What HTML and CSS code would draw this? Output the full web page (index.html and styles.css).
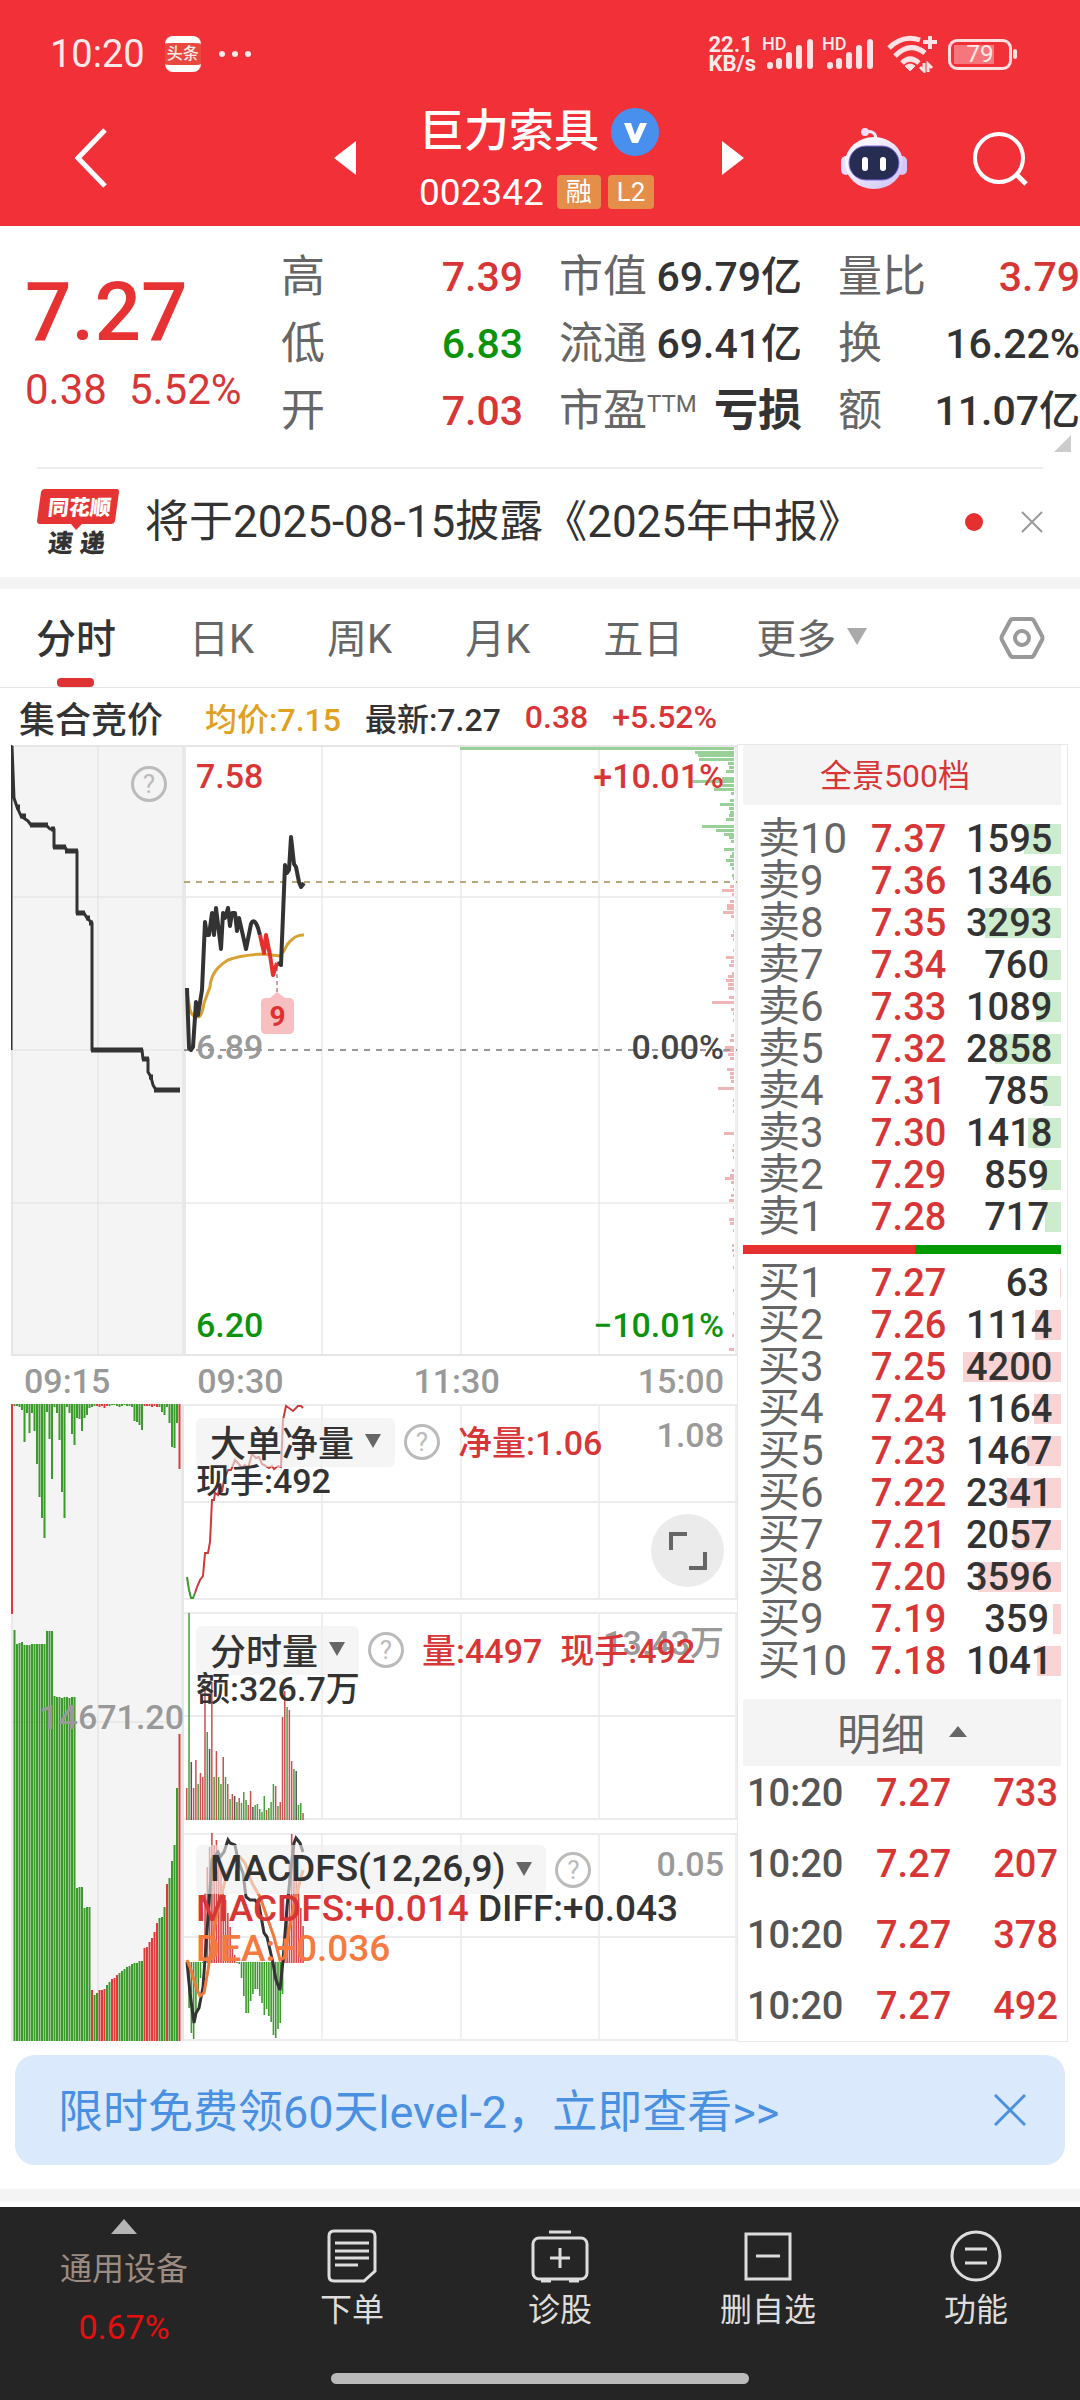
FILE: index.html
```html
<!DOCTYPE html>
<html lang="zh-CN">
<head>
<meta charset="utf-8">
<meta name="viewport" content="width=device-width">
<title>巨力索具 002342</title>
<link rel="stylesheet" href="styles.css">
</head>
<body>
<header class="top">
  <div class="status">
    <span class="clock">10:20</span>
    <span class="app-chip">头条</span>
    <span class="dots"><i></i><i></i><i></i></span>
    <span class="speed">22.1<br>KB/s</span>
    <span class="signal"><b>HD</b>
      <svg width="50" height="32" viewBox="0 0 50 32" fill="none" stroke="#ffe3e4" stroke-width="6" stroke-linecap="round"><path d="M5 28v-1M14 28v-5M24 28V17M34 28V10M45 28V4"/></svg></span>
    <span class="signal"><b>HD</b>
      <svg width="50" height="32" viewBox="0 0 50 32" fill="none" stroke="#ffe3e4" stroke-width="6" stroke-linecap="round"><path d="M5 28v-1M14 28v-5M24 28V17M34 28V10M45 28V4"/></svg></span>
    <svg class="wifi" width="51" height="38" viewBox="0 0 51 38" fill="none" stroke="#ffe3e4" stroke-width="5"><path d="M2 13Q16-1 33 5M8 21Q23 6 38 18M15 28Q23 20 32 28"/><path d="M18 31q5-4 10 0l-5 5z" fill="#ffe3e4" stroke-width="1"/><path d="M43 1v13M36 7h14" stroke-width="4"/><path d="M37 28v8l-4-4M41 37v-8l4 4" stroke-width="3"/></svg>
    <span class="battery"><span>79</span></span>
  </div>
  <div class="titlebar">
    <button class="ic back" aria-label="返回"><svg width="34" height="62" viewBox="0 0 34 62" fill="none" stroke="#fff" stroke-width="5"><path d="M31 3L4 31l27 28"/></svg></button>
    <button class="ic prev" aria-label="上一只"><svg width="24" height="36" viewBox="0 0 24 36" fill="#fff"><path d="M23 1v34L1 18z"/></svg></button>
    <div class="stock">
      <h1>巨力索具<svg width="48" height="48" viewBox="0 0 48 48"><circle cx="24" cy="24" r="24" fill="#4990ee"/><path d="M13 15h7l4 12 5-12h7l-9 20h-6z" fill="#fff"/></svg></h1>
      <div class="code">002342<span class="tag">融</span><span class="tag">L2</span></div>
    </div>
    <button class="ic next" aria-label="下一只"><svg width="24" height="36" viewBox="0 0 24 36" fill="#fff"><path d="M1 1v34l22-17z"/></svg></button>
    <button class="ic robot" aria-label="智能助手"><svg width="66" height="64" viewBox="0 0 66 64"><defs><linearGradient id="rb" x1="0" y1="0" x2="1" y2="1"><stop offset=".3" stop-color="#fbf3ff"/><stop offset="1" stop-color="#c9bff5"/></linearGradient></defs><path d="M24 6q10-2 11 6" fill="none" stroke="#f3e9ff" stroke-width="3"/><circle cx="24" cy="6" r="4" fill="#f3dcf4"/><rect x="0" y="30" width="10" height="19" rx="5" fill="#e9dcff"/><rect x="56" y="30" width="10" height="19" rx="5" fill="#d4c6fa"/><ellipse cx="33" cy="37" rx="29" ry="26" fill="url(#rb)"/><rect x="8" y="20" width="50" height="34" rx="17" fill="#272c52" stroke="#7d6fe0" stroke-width="1"/><rect x="21" y="31" width="6" height="14" rx="3" fill="#fff"/><rect x="39" y="31" width="6" height="14" rx="3" fill="#fff"/></svg></button>
    <button class="ic search" aria-label="搜索"><svg width="56" height="56" viewBox="0 0 56 56" fill="none" stroke="#fff" stroke-width="4"><circle cx="27" cy="28" r="24"/><path d="M44 44l10 10" stroke-width="5"/></svg></button>
  </div>
</header>

<main>
<section class="quote">
  <div class="last"><strong>7.27</strong><span>0.38</span><span>5.52%</span></div>
  <dl class="facts f1"><dt>高</dt><dd class="up">7.39</dd><dt>低</dt><dd class="down">6.83</dd><dt>开</dt><dd class="up">7.03</dd></dl>
  <dl class="facts f2"><dt>市值</dt><dd>69.79亿</dd><dt>流通</dt><dd>69.41亿</dd><dt>市盈<sup>TTM</sup></dt><dd class="heavy">亏损</dd></dl>
  <dl class="facts f3"><dt>量比</dt><dd class="up">3.79</dd><dt>换</dt><dd>16.22%</dd><dt>额</dt><dd>11.07亿</dd></dl>
  <i class="corner"></i>
</section>
<section class="news">
  <svg width="82" height="68" viewBox="0 0 82 68"><path d="M8 1h72q2 0 2 3l-4 29q-1 3-4 3H45l-6 6-5-6H3q-3 0-3-3L4 4q1-3 4-3z" fill="#e63434"/><g transform="skewX(-6)" font-family="Noto Sans CJK SC" font-weight="900"><text x="13" y="27" font-size="21" fill="#fff">同花顺</text><text x="17" y="64" font-size="25" fill="#333">速</text><text x="49" y="64" font-size="25" fill="#333">递</text></g></svg>
  <a href="#news">将于2025-08-15披露《2025年中报》</a>
  <i class="red-dot"></i>
  <button class="ic" aria-label="关闭"><svg width="22" height="22" viewBox="0 0 22 22" stroke="#999" stroke-width="2"><path d="M1 1l20 20M21 1L1 21"/></svg></button>
</section>
<nav class="tabs">
  <button class="active">分时</button><button>日K</button><button>周K</button><button>月K</button><button>五日</button><button>更多<i class="caret light"></i></button>
  <button class="gear" aria-label="设置"><svg width="46" height="44" viewBox="0 0 46 44" fill="none" stroke="#999" stroke-width="4"><path d="M14 3h18q2 0 3 2l8 15q1 2 0 4l-8 15q-1 2-3 2H14q-2 0-3-2L3 24q-1-2 0-4l8-15q1-2 3-2z"/><circle cx="23" cy="22" r="7"/></svg></button>
</nav>

<div class="board">
  <div class="charts">
    <div class="legend"><b>集合竞价</b><span class="avg">均价:7.15</span><span>最新:7.27</span><span class="up">0.38</span><span class="up">+5.52%</span></div>
    <div class="price">
      <svg viewBox="0 0 726 611" preserveAspectRatio="none">
        <path d="M0 0h172v610H0z" fill="#f4f4f4"/>
        <path d="M0 1h726M0 610h726M1 0v610" stroke="#e6e6e6" stroke-width="2"/>
        <path d="M0 152h726M0 305h173M0 458h726M87 0v610M311 0v610M450 0v610M588 0v610M725 0v610" stroke="#e0e0e0"/>
        <path d="M173 0v611" stroke="#e8e8e8" stroke-width="4"/>
        <g id="profile"></g>
        <path d="M173 137h553" stroke="#b8a878" stroke-width="2" stroke-dasharray="6 6"/>
        <path d="M173 305h553" stroke="#999" stroke-width="2" stroke-dasharray="6 6"/>
        <g fill="none" stroke="#333" stroke-linejoin="round">
          <path stroke-width="3" d="M0 0V305M1 1L3 53L6 62L10 71L17 76L20 80H35L39 84H43V102H54L56 106H66V168H73L76 173L81 178V305H131L132 314H137V327L140 332L142 340L145 345H168"/>
          <path stroke-width="5" d="M5 62h4M9 71h6M19 80h18M40 84h4M42 102h13M54 106h13M65 168h9M75 173h4M78 178h4M80 305h52M131 314h7M138 332h4M143 345h26"/>
          <path stroke="#d9a032" stroke-width="3" d="M176 248L179 265Q181 272 187 272Q191 272 193 258L199 242Q200 225 217 215Q230 210 252 209L269 211Q273 207 276 200Q284 189 293 190"/>
          <path stroke-width="4" d="M176 243L178 303L180 305L182 302L185 257L187 270L191 245L194 177L196 190H198L201 168L203 190L205 163L210 204L212 168L214 173L217 163L219 181L221 168H224L226 186L228 173L235 204L240 179Q243 172 247 183L249 190M266 218L270 220L274 120L276 128L278 125L280 92L283 119L285 122L288 137L290 142L293 138"/>
          <path stroke="#e63030" stroke-width="4" d="M249 190L253 208L255 190L259 210L262 230L266 218"/>
        </g>
        <path d="M266 222v26" stroke="#a04040" stroke-dasharray="4 3"/>
        <path d="M266 247l8 6h4q5 0 5 5v26q0 5-5 5h-23q-5 0-5-5v-26q0-5 5-5h4z" fill="#f7bfc0"/>
      </svg>
      <span class="signal-nine">9</span>
      <button class="help auction-help" aria-label="说明">?</button>
      <div class="scale"><p class="up"><span>7.58</span><span>+10.01%</span></p><p class="mid"><span>6.89</span><span>0.00%</span></p><p class="down"><span>6.20</span><span>−10.01%</span></p></div>
    </div>
    <div class="axis"><span>09:15</span><span>09:30</span><span>11:30</span><span>15:00</span></div>
    <div class="lower">
      <div class="auction">
        <svg viewBox="0 0 173 637" preserveAspectRatio="none">
          <path d="M0 0h172v637H0z" fill="#f4f4f4"/>
          <path d="M87 0v637M0 318h173M1 0v637" stroke="#dedede"/>
          <path d="M172 0v637" stroke="#e6e6e6" stroke-width="3"/>
          <g id="auctionNet"></g><g id="auctionVol"></g>
        </svg>
        <span class="auction-max">14671.20</span>
      </div>
      <div class="panels">
        <div class="panel p1">
          <svg viewBox="0 0 553 196" preserveAspectRatio="none">
            <path class="grid" d="M138 0v196M277 0v196M415 0v196M552 0v196"/><path class="rule" d="M0 1h553M0 98h553M0 195h553"/>
            <g fill="none" stroke-width="2"><path stroke="#3a9a2a" d="M3 173L5 186L7 194H9L11 189"/><path stroke="#cc3a3a" d="M11 189L13 183L16 176L19 172L21 149H24L26 138L28 96H30L31 89L34 91L36 80L38 88L40 76L44 66H47L51 56L54 59L58 64L61 61L64 64L68 50L72 54L75 53L78 60L80 61L85 64L88 62L90 65L94 62L97 63L99 16L102 2L105 4L109 7L114 2L117 2L119 4"/></g>
          </svg>
          <div class="info"><button class="pick">大单净量<i class="caret"></i></button><button class="help" aria-label="说明">?</button><span class="up">净量:1.06</span></div>
          <div class="info2">现手:492</div><span class="max">1.08</span>
          <button class="expand" aria-label="全屏"><svg width="40" height="40" viewBox="0 0 40 40" fill="none" stroke="#666" stroke-width="4"><path d="M3 19V3h16M37 21v16H21"/></svg></button>
        </div>
        <div class="panel p2">
          <svg viewBox="0 0 553 208" preserveAspectRatio="none">
            <path class="grid" d="M138 0v208M277 0v208M415 0v208M552 0v208"/><path class="rule" d="M0 1h553M0 104h553M0 207h553"/><g id="vol"></g>
          </svg>
          <span class="max">13.43万</span>
          <div class="info"><button class="pick">分时量<i class="caret"></i></button><button class="help" aria-label="说明">?</button><span class="up">量:4497</span><span class="up">现手:492</span></div>
          <div class="info2">额:326.7万</div>
        </div>
        <div class="panel p3">
          <svg viewBox="0 0 553 208" preserveAspectRatio="none">
            <path class="grid" d="M138 0v208M277 0v208M415 0v208M552 0v208"/><path class="rule" d="M0 1h553M0 104h553M0 207h553"/><g id="macd"></g>
            <g fill="none" stroke-width="3"><path stroke="#333" d="M3 129L6 160L10 190L12 180L15 175L19 154L24 84L28 27L34 19L36 24L40 19L44 7L46 10L51 12L54 27L59 40L62 64L66 67H71L75 72L80 100L83 104L89 130L92 147L96 157L99 127L103 74L108 27L110 10L112 5L116 10L119 19"/><path stroke="#f07a3c" d="M3 127L7 137L12 154L16 163L20 160L24 137L27 117L33 80L43 40L50 27L56 24L61 30L68 50L76 64L83 84L90 104L96 127L101 124L105 97L111 67L119 37"/></g>
          </svg>
          <div class="info"><button class="pick">MACDFS(12,26,9)<i class="caret"></i></button><button class="help" aria-label="说明">?</button></div>
          <div class="info2"><span class="up">MACDFS:+0.014</span> DIFF:+0.043<br><span class="dea">DEA:+0.036</span></div><span class="max">0.05</span>
        </div>
      </div>
    </div>
  </div>

  <aside class="book">
    <button class="book-head">全景500档</button>
    <table class="depth sell"><tbody>
      <tr><th>卖10</th><td>7.37</td><td><i style="width:37px"></i><span>1595</span></td></tr>
      <tr><th>卖9</th><td>7.36</td><td><i style="width:31px"></i><span>1346</span></td></tr>
      <tr><th>卖8</th><td>7.35</td><td><i style="width:76px"></i><span>3293</span></td></tr>
      <tr><th>卖7</th><td>7.34</td><td><i style="width:18px"></i><span>760</span></td></tr>
      <tr><th>卖6</th><td>7.33</td><td><i style="width:25px"></i><span>1089</span></td></tr>
      <tr><th>卖5</th><td>7.32</td><td><i style="width:66px"></i><span>2858</span></td></tr>
      <tr><th>卖4</th><td>7.31</td><td><i style="width:18px"></i><span>785</span></td></tr>
      <tr><th>卖3</th><td>7.30</td><td><i style="width:33px"></i><span>1418</span></td></tr>
      <tr><th>卖2</th><td>7.29</td><td><i style="width:20px"></i><span>859</span></td></tr>
      <tr><th>卖1</th><td>7.28</td><td><i style="width:16px"></i><span>717</span></td></tr>
    </tbody></table>
    <div class="ratio"><i style="width:54%"></i></div>
    <table class="depth buy"><tbody>
      <tr><th>买1</th><td>7.27</td><td><i style="width:1px"></i><span>63</span></td></tr>
      <tr><th>买2</th><td>7.26</td><td><i style="width:26px"></i><span>1114</span></td></tr>
      <tr><th>买3</th><td>7.25</td><td><i style="width:98px"></i><span>4200</span></td></tr>
      <tr><th>买4</th><td>7.24</td><td><i style="width:27px"></i><span>1164</span></td></tr>
      <tr><th>买5</th><td>7.23</td><td><i style="width:34px"></i><span>1467</span></td></tr>
      <tr><th>买6</th><td>7.22</td><td><i style="width:54px"></i><span>2341</span></td></tr>
      <tr><th>买7</th><td>7.21</td><td><i style="width:48px"></i><span>2057</span></td></tr>
      <tr><th>买8</th><td>7.20</td><td><i style="width:83px"></i><span>3596</span></td></tr>
      <tr><th>买9</th><td>7.19</td><td><i style="width:8px"></i><span>359</span></td></tr>
      <tr><th>买10</th><td>7.18</td><td><i style="width:24px"></i><span>1041</span></td></tr>
    </tbody></table>
    <button class="detail-head">明细<i class="caret upward"></i></button>
    <table class="ticks"><tbody>
      <tr><td>10:20</td><td>7.27</td><td>733</td></tr>
      <tr><td>10:20</td><td>7.27</td><td>207</td></tr>
      <tr><td>10:20</td><td>7.27</td><td>378</td></tr>
      <tr><td>10:20</td><td>7.27</td><td>492</td></tr>
    </tbody></table>
  </aside>
</div>

<div class="banner"><a href="#level2">限时免费领60天level-2，立即查看&gt;&gt;</a><button class="ic" aria-label="关闭"><svg width="32" height="32" viewBox="0 0 32 32" stroke="#4a90e2" stroke-width="3"><path d="M1 1l30 30M31 1L1 31"/></svg></button></div>
<div class="strip"></div>
</main>

<footer class="dock">
  <div class="dock-row">
    <button class="sector"><i class="caret upward"></i><span>通用设备</span><em>0.67%</em></button>
    <button><svg width="50" height="54" viewBox="0 0 50 54" fill="none" stroke="#ddd" stroke-width="3"><path d="M7 2h36q5 0 5 5v35l-11 10H7q-5 0-5-5V7q0-5 5-5zM8 14h34M8 22h34M8 29h34M8 36h23"/></svg>下单</button>
    <button><svg width="58" height="54" viewBox="0 0 58 54" fill="none" stroke="#ddd" stroke-width="3"><rect x="2" y="9" width="54" height="41" rx="6"/><path d="M18 3h22M29 19v20M19 29h20M10 52h10M38 52h10"/></svg>诊股</button>
    <button><svg width="50" height="54" viewBox="0 0 50 54" fill="none" stroke="#ddd" stroke-width="3"><path d="M3 5h44v45H3zM13 27h24"/></svg>删自选</button>
    <button><svg width="54" height="54" viewBox="0 0 54 54" fill="none" stroke="#ddd" stroke-width="3"><circle cx="27" cy="27" r="24"/><path d="M16 20h22M16 34h22"/></svg>功能</button>
  </div>
  <i class="home"></i>
</footer>
<script src="charts.js"></script>
</body>
</html>
```
FILE: styles.css
```css
* { box-sizing: border-box; }
body { margin: 0; background: #fff; color: #333; font-family: Roboto, "Noto Sans CJK SC", sans-serif; }
button { margin: 0; padding: 0; border: 0; background: none; color: inherit; font: inherit; }
a { color: inherit; text-decoration: none; }
svg { display: block; flex: none; }
h1, p, dl, dd { margin: 0; }
table { border-collapse: collapse; }
.up { color: #d83636; }
.down { color: #0b930b; }
.ic { display: flex; }

/* header */
.top { background: #f13037; color: #fff; padding-bottom: 14px; }
.status { display: flex; align-items: center; height: 104px; padding: 4px 68px 0 50px; color: #ffe9ea; }
.clock { font-size: 38px; }
.app-chip { width: 36px; height: 36px; margin-left: 20px; border: solid #fff; border-width: 7px 0; border-radius: 8px; background: #e8483e; font-size: 16px; line-height: 22px; text-align: center; font-weight: 500; }
.dots { display: flex; gap: 7px; margin-left: 18px; }
.dots i { width: 6px; height: 6px; border-radius: 50%; background: #ffe9ea; }
.speed { margin-left: auto; font-size: 22px; line-height: 19px; font-weight: 700; }
.signal { position: relative; margin-left: 9px; }
.signal b { position: absolute; left: -3px; top: -2px; font-size: 18px; line-height: 16px; font-weight: 500; }
.signal + .signal { margin-left: 10px; }
.wifi { margin-left: 12px; }
.battery { position: relative; width: 64px; height: 31px; margin-left: 10px; padding: 3px; border: 3px solid #ffdfe0; border-radius: 9px; font-size: 24px; line-height: 19px; text-align: center; }
.battery span { display: block; background: linear-gradient(90deg, #f5777b 40px, transparent 40px); }
.battery::after { content: ""; position: absolute; right: -8px; top: 7px; width: 4px; height: 10px; border-radius: 2px; background: #ffdfe0; }
.titlebar { display: flex; align-items: center; height: 108px; padding: 0 52px 0 74px; }
.prev { margin-left: auto; }
.stock { margin: 0 62px; }
.stock h1 { display: flex; align-items: center; gap: 12px; height: 60px; padding-top: 6px; font-size: 45px; line-height: 48px; font-weight: 500; }
.code { display: flex; align-items: center; gap: 7px; height: 58px; padding-top: 8px; font-size: 37px; }
.tag { height: 34px; padding: 0 9px; border-radius: 4px; background: #e58e49; font-size: 26px; line-height: 34px; }
.code .tag:first-child { margin-left: 6px; }
.robot { margin-left: 96px; }
.search { margin-left: 65px; }

/* quote */
.quote { position: relative; display: flex; height: 241px; padding: 18px 0 0 25px; }
.last { width: 256px; padding-top: 20px; color: #d83636; font-size: 42px; line-height: 60px; white-space: nowrap; }
.last strong { display: block; font-size: 82px; line-height: 96px; font-weight: 500; color: #e63232; }
.last span { margin-right: 22px; }
.last span + span { margin-right: 0; }
.facts { display: grid; grid-template-columns: auto auto; justify-content: space-between; grid-auto-rows: 67px; line-height: 67px; font-size: 41px; white-space: nowrap; }
.facts dt { color: #666; font-size: 44px; }
.facts dd { text-align: right; font-weight: 500; }
.facts sup { position: absolute; font-size: 24px; line-height: 52px; }
.facts .heavy { font-size: 44px; font-weight: 700; }
.f1 { width: 242px; }
.f2 { width: 243px; margin-left: 36px; }
.f3 { flex: 1; margin-left: 36px; }
.corner { position: absolute; right: 9px; bottom: 15px; border: solid transparent; border-width: 0 0 17px 17px; border-bottom-color: #ccc; }

.news { display: flex; align-items: center; height: 110px; margin: 0 37px; padding-bottom: 2px; border-top: 2px solid #ececec; font-size: 44px; }
.news svg { overflow: visible; }
.news a { margin-left: 26px; line-height: 54px; white-space: nowrap; }
.red-dot { width: 18px; height: 18px; margin: 0 38px 0 auto; border-radius: 50%; background: #e63030; }

.tabs { display: flex; align-items: center; gap: 73px; height: 111px; padding: 0 35px 0 36px; border-top: 12px solid #f4f4f4; border-bottom: 1px solid #e4e4e4; color: #666; font-size: 40px; }
.tabs button { position: relative; display: flex; align-items: center; height: 98px; padding-bottom: 4px; white-space: nowrap; }
.tabs .active { color: #333; font-weight: 500; }
.tabs .active::after { content: ""; position: absolute; left: 21px; bottom: 0; width: 37px; height: 9px; border-radius: 4px; background: #e03232; }
.tabs .gear { margin-left: auto; padding-bottom: 0; }
.caret { display: inline-block; margin-left: 11px; border: solid transparent; border-width: 14px 8px 0; border-top-color: #666; }
.caret.light { border-width: 17px 10px 0; border-top-color: #aaa; }
.caret.upward { border-width: 0 9px 11px; border-bottom-color: #666; }

/* chart board */
.board { display: grid; grid-template-columns: minmax(0, 1fr) 331px; padding: 0 12px 0 11px; }
.legend { display: flex; align-items: center; gap: 24px; height: 57px; padding: 0 0 0 8px; font-size: 32px; white-space: nowrap; }
.legend b { margin-right: 18px; font-size: 36px; font-weight: 500; }
.legend span { font-weight: 500; }
.avg { color: #e0a020; }
.price { position: relative; height: 611px; }
.price > svg, .auction > svg, .panel > svg { width: 100%; height: 100%; }
.signal-nine { position: absolute; left: 250px; top: 254px; width: 33px; font-size: 28px; line-height: 36px; font-weight: 700; text-align: center; color: #e03030; }
.scale { position: absolute; inset: 9px 13px 9px 185px; display: flex; flex-direction: column; justify-content: space-between; font-size: 34px; line-height: 44px; font-weight: 500; }
.scale p { display: flex; justify-content: space-between; }
.mid { margin-bottom: 8px; color: #444; }
.mid span:first-child { color: #999; }
.help { width: 36px; height: 36px; border: 3px solid #bbb; border-radius: 50%; color: #bbb; font-size: 26px; line-height: 30px; text-align: center; }
.auction-help { position: absolute; left: 120px; top: 21px; }
.axis { display: flex; height: 48px; padding: 1px 13px 0; color: #999; font-size: 34px; line-height: 48px; font-weight: 500; }
.axis span:nth-child(2) { margin-left: 87px; }
.axis span:nth-child(3) { margin-left: auto; }
.axis span:nth-child(4) { margin-left: 138px; }
.lower { display: grid; grid-template-columns: 173px minmax(0, 1fr); height: 637px; }
.auction { position: relative; min-height: 0; }
.auction-max { position: absolute; right: 0; top: 291px; color: #999; font-size: 34px; line-height: 44px; font-weight: 500; }
.panels { display: flex; flex-direction: column; gap: 12px; }
.panel { position: relative; height: 208px; }
.panel.p1 { height: 196px; }
.panel.p2 { margin-bottom: 1px; }
.grid { stroke: #e0e0e0; }
.rule { stroke: #ececec; stroke-width: 2; }
.info { position: absolute; left: 12px; top: 12px; display: flex; align-items: center; font-size: 34px; font-weight: 500; white-space: nowrap; }
.pick { display: flex; align-items: center; height: 49px; padding: 0 14px 2px; border-radius: 6px; background: rgba(238, 238, 238, .6); font-size: 36px; font-weight: 500; }
.info .help { margin: 0 18px 0 9px; font-weight: 400; }
.info span { margin-bottom: 3px; }
.info span + span { margin-left: 18px; }
.info2 { position: absolute; left: 12px; top: 56px; font-size: 34px; line-height: 42px; font-weight: 500; white-space: nowrap; }
.p3 .pick { font-size: 37px; }
.p3 .info2 { font-size: 37px; line-height: 40px; }
.dea { color: #f47a40; }
.max { position: absolute; right: 13px; top: 9px; color: #999; font-size: 34px; line-height: 44px; font-weight: 500; }
.expand { position: absolute; right: 13px; top: 110px; display: flex; align-items: center; justify-content: center; width: 73px; height: 73px; border-radius: 50%; background: #ebebeb; }

/* order book */
.book { margin-top: 56px; padding: 0 6px 0 5px; border: 1px solid #e8e8e8; }
.book-head, .detail-head { display: block; width: 100%; background: #f4f4f4; }
.book-head { height: 60px; margin-bottom: 13px; padding: 0 14px 4px 0; color: #d83636; font-size: 32px; }
.depth { width: 100%; table-layout: fixed; }
.depth tr { height: 42px; }
.depth th, .depth td { padding: 0; line-height: 42px; }
.depth th { width: 128px; padding-left: 15px; color: #666; font-size: 42px; font-weight: 400; text-align: left; }
.depth td { color: #d83636; font-size: 38px; font-weight: 500; }
.depth td:last-child { position: relative; padding-right: 12px; color: #333; text-align: right; }
.depth i { position: absolute; right: 0; top: 6px; height: 30px; background: #cdebcd; }
.depth span { position: relative; }
.buy i { background: #f9d4d5; }
.ratio { display: flex; height: 9px; margin: 7px 0 8px; background: #009a00; }
.ratio i { background: #e63030; }
.detail-head { display: flex; align-items: center; justify-content: center; height: 67px; margin-top: 17px; padding-bottom: 2px; color: #666; font-size: 44px; }
.detail-head .caret { margin-left: 24px; }
.ticks { width: 100%; margin-top: -9px; table-layout: fixed; }
.ticks td { height: 71px; padding: 0; color: #d83636; font-size: 38px; font-weight: 500; }
.ticks td:first-child { width: 133px; padding-left: 4px; color: #555; }
.ticks td:last-child { padding-right: 3px; text-align: right; }

.banner { display: flex; align-items: center; justify-content: space-between; height: 110px; margin: 13px 15px 24px; padding: 0 39px 0 43px; border-radius: 20px; background: #dae9fb; color: #4a90e2; font-size: 45px; }
.banner a { margin-bottom: 4px; }
.strip { height: 12px; margin-bottom: 6px; background: #f4f4f4; }

/* bottom dock */
.dock { height: 193px; background: #252525; color: #ddd; font-size: 32px; }
.dock-row { display: grid; grid-template-columns: 248fr repeat(4, 208fr); height: 166px; }
.dock-row button { display: flex; flex-direction: column; align-items: center; padding-top: 22px; line-height: 54px; }
.dock-row .sector { padding-top: 12px; line-height: 58px; color: #9b8b80; }
.sector .caret { margin: 0 0 6px; border-width: 0 13px 15px; border-bottom-color: #b5b5b5; }
.sector em { color: #e60f0f; font-size: 34px; font-style: normal; }
.home { display: block; width: 418px; height: 11px; margin: 0 auto; border-radius: 6px; background: #bbb; }
```
FILE: charts.js
```js
var NS = 'http://www.w3.org/2000/svg';
var GREEN = '#3a9a2a', RED = '#dd3a3a', DARK = '#555';

function bar(group, x, y, w, h, fill) {
  var r = document.createElementNS(NS, 'rect');
  r.setAttribute('x', x);
  r.setAttribute('y', y);
  r.setAttribute('width', w);
  r.setAttribute('height', h);
  r.setAttribute('fill', fill);
  document.getElementById(group).appendChild(r);
}

// Holdings by price level, right edge of the price chart: [y, length]
[[3, 274], [7, 39], [10, 36], [14, 35], [18, 6], [22, 5], [26, 8], [33, 12], [36, 43], [40, 12], [44, 20], [48, 3],
 [55, 4], [59, 14], [63, 5], [67, 4], [70, 5], [74, 8], [81, 32], [85, 18], [89, 10], [92, 5], [96, 3], [104, 10],
 [108, 2], [111, 4], [115, 8], [119, 4], [123, 2], [130, 2], [133, 1]]
  .forEach(function (d) { bar('profile', 723 - d[1], d[0] - 1, d[1], 3, '#98d098'); });
[[141, 4], [145, 12], [149, 2], [156, 4], [160, 7], [163, 7], [167, 11], [171, 3], [186, 1], [190, 3], [194, 1],
 [205, 1], [212, 8], [216, 3], [220, 5], [228, 2], [231, 6], [235, 8], [239, 6], [243, 6], [252, 5], [257, 22],
 [264, 3], [268, 1], [275, 1], [290, 3], [295, 4], [302, 9], [305, 11], [309, 6], [313, 4], [324, 7], [328, 4],
 [332, 4], [336, 3], [343, 16], [355, 1], [360, 1], [366, 1], [388, 10], [400, 1], [405, 2], [412, 1], [425, 2],
 [430, 4], [433, 9], [437, 3], [444, 1], [450, 3], [455, 5], [462, 1], [474, 5], [478, 4], [485, 1], [500, 2],
 [505, 2], [510, 1], [522, 1], [545, 1], [568, 1], [590, 2], [604, 5]]
  .forEach(function (d) { bar('profile', 723 - d[1], d[0] - 1, d[1], 3, '#efb4b4'); });

// Opening auction, net orders; negative values are red
[-210, 2, 2, 3, 6, 38, 9, 29, 9, 27, 60, 93, 114, 134, 8, 35, 75, 3, 9, 36, 88, 114, 3, 9, 30, 41, 14, 15, 27, 14,
 11, 4, 3, 2, -2, -3, -2, -4, -2, 2, 1, 1, 2, 3, 2, 1, 2, 2, 3, 17, 18, 21, 26, -2, -2, -2, -3, -2, -3, 3, 8, 11,
 3, 19, 43, 44, 19, -65]
  .forEach(function (v, i) { bar('auctionNet', i * 2.5, 0, 2, Math.abs(v), v < 0 ? RED : GREEN); });

// Opening auction, volume: bar top, negative values are red
[226, 240, 239, 238, 241, 241, 241, 240, 240, 240, 240, 240, 240, 227, 227, 227, 292, 293, 293, 294, 293, 293, 294,
 293, 293, 484, 483, 483, 504, 503, 503, -586, 591, 589, -586, -586, -585, 581, 578, -575, -574, -571, 569, 567, 565,
 563, 562, 560, 559, 559, 557, 557, -544, -543, -538, -534, -528, -519, 514, 513, 503, -480, 474, 457, 441, 384, -330]
  .forEach(function (v, i) { bar('auctionVol', 2.5 + i * 2.5, Math.abs(v), 2, 637 - Math.abs(v), v < 0 ? RED : GREEN); });

// Minute volume: [height, colour]
var VOL = '32r 207g 58d 32r 60r 36g 47r 43r 132r 88g 71d 138r 43g 69r 43g 36g 63r 43g 36r 21g 26r 24d 18g 22r 17g 28g 20g 15r 29r 13d 15g 16g 11g 8g 24g 10r 12g 18g 36g 34r 14g 18r 103r 129r 113g 110r 59r 51g 49d 15g 17g 7r';
VOL.split(' ').forEach(function (s, i) {
  var h = parseInt(s, 10), c = { r: '#cc5050', g: '#4aa03c', d: DARK }[s.slice(-1)];
  bar('vol', 2 + i * 2.28, 208 - h, 1.5, h, c);
});

// MACD histogram around the zero line
[129, 174, 199, 205, 177, 160, 144, 129, 60, 34, 14, 0, 12, 7, 24, 37, 54, 67, 80, 94, 114, 122, 129, 130, 144, 162,
 179, 179, 167, 160, 155, 155, 162, 169, 181, 175, 182, 188, 201, 204, 195, 189, 160, 117, 67, 27, 1, 14, 30, 54, 75, 93]
  .forEach(function (y, i) {
    bar('macd', 2 + i * 2.28, Math.min(y, 129), 1.6, Math.abs(y - 129) + 1, y < 129 ? '#d84848' : GREEN);
  });
```
